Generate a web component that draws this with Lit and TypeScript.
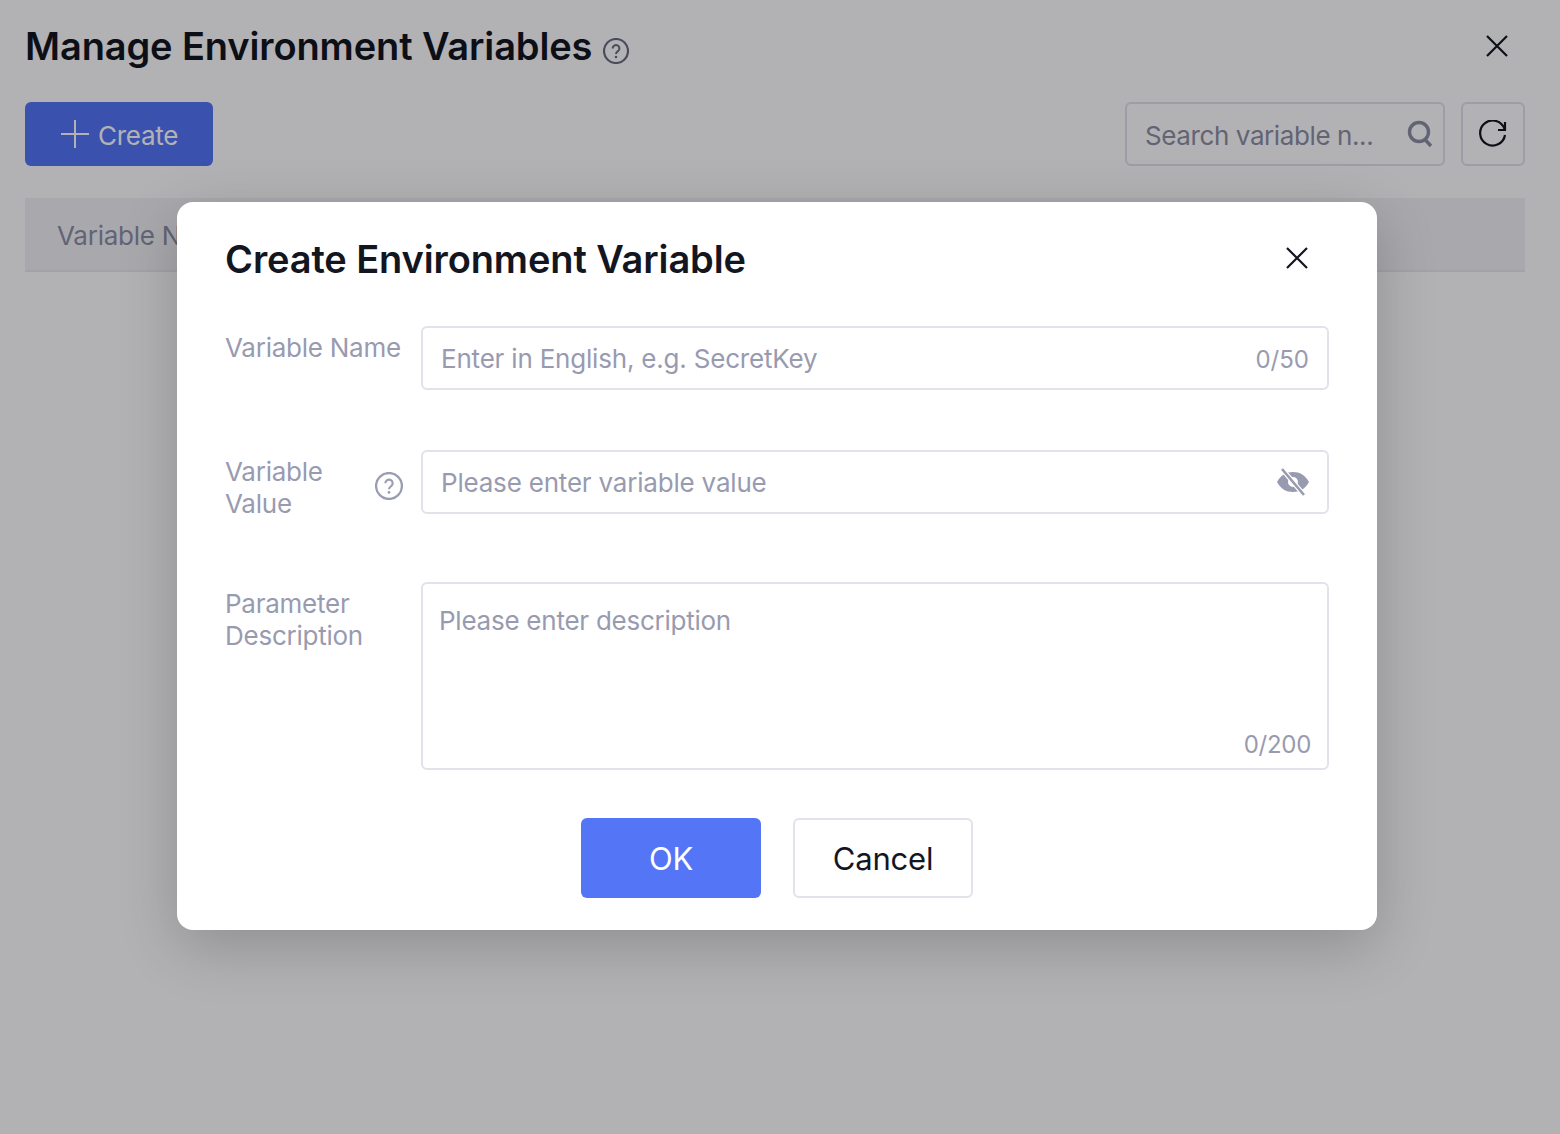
import { LitElement, html, css, svg } from "lit";
import { customElement } from "lit/decorators.js";

const closeIcon = svg`<path d="M2 2 L22 22 M22 2 L2 22" fill="none" stroke="currentColor" stroke-width="2.2"/>`;
const helpIcon = svg`<circle cx="13" cy="13" r="12" fill="none" stroke="currentColor" stroke-width="2.2"/><path d="M9.6 10.4a3.4 3.4 0 1 1 5.4 2.8c-1.2.8-2 1.4-2 2.9" fill="none" stroke="currentColor" stroke-width="2"/><circle cx="13" cy="19" r="1.3" fill="currentColor"/>`;

@customElement("app-root")
export class AppRoot extends LitElement {
  static styles = css`
    :host { display: block; position: relative; width: 1560px; height: 1134px; overflow: hidden; background: #fff; font-family: Inter, "Liberation Sans", sans-serif; color: #14161f; font-size: 26px; letter-spacing: -0.25px; }
    * { box-sizing: border-box; }
    .page { display: flex; flex-direction: column; padding: 0 35px 0 25px; width: 1560px; }
    .head { display: flex; align-items: center; height: 102px; padding-bottom: 10px; }
    .head h1, .dialog h2 { margin: 0; font-size: 38px; line-height: 56px; font-weight: 600; letter-spacing: -0.12px; }
    .head .help { margin: 10px 0 0 11px; width: 26px; height: 26px; color: #686c80; }
    .head .x { margin-left: auto; margin-right: 16px; width: 24px; height: 24px; }
    .toolbar { display: flex; align-items: center; height: 64px; gap: 16px; width: 1500px; }
    .create { display: flex; align-items: center; gap: 9px; height: 64px; width: 188px; padding-left: 36px; background: #5475f6; border-radius: 6px; color: #fff; }
    .create svg { width: 28px; height: 28px; }
    .create span, .search span, .thead span { padding-top: 2px; }
    .search { margin-left: auto; display: flex; align-items: center; justify-content: space-between; width: 320px; height: 64px; padding: 0 10px 0 18px; border: 2px solid #e1e2ea; border-radius: 6px; color: #8d90a5; letter-spacing: -0.4px; }
    .search svg { width: 26px; height: 28px; }
    .refresh { display: flex; align-items: center; justify-content: center; width: 64px; height: 64px; border: 2px solid #e1e2ea; border-radius: 6px; }
    .refresh svg { width: 28px; height: 28px; }
    .thead { margin-top: 32px; width: 1500px; height: 74px; display: flex; align-items: center; padding-left: 32px; background: #f2f3f5; border-bottom: 2px solid #e8e9ee; color: #8d90a5; }
    .overlay { position: absolute; inset: 0; background: rgba(0, 0, 6, 0.3); display: flex; justify-content: center; align-items: flex-start; padding: 202px 6px 0 0; }
    .dialog { width: 1200px; height: 728px; background: #fff; border-radius: 16px; padding: 32px 48px; display: flex; flex-direction: column; box-shadow: 0 16px 60px rgba(0, 0, 0, 0.2); }
    .title { display: flex; align-items: center; justify-content: space-between; height: 50px; margin-bottom: 42px; }
    .dialog h2 { white-space: nowrap; }
    .title svg { width: 24px; height: 24px; margin-right: 20px; margin-top: -2px; }
    .row { display: flex; margin-bottom: 60px; }
    .label { width: 196px; flex: none; display: flex; align-items: center; justify-content: space-between; padding: 5px 18px 2px 0; line-height: 32px; color: #989bb0; align-self: flex-start; }
    .label.wide { padding-right: 0; white-space: nowrap; }
    .label span { padding-top: 1px; }
    .label.wide { padding-top: 6px; padding-bottom: 2px; }
    .label svg { width: 28px; height: 28px; color: #9a9db1; flex: none; margin-right: 0; margin-top: -3px; }
    .lab2 { width: 110px; }
    .input { flex: 1; height: 64px; border: 2px solid #e1e2ea; border-radius: 6px; display: flex; align-items: center; justify-content: space-between; padding: 0 18px; color: #989bb0; letter-spacing: -0.2px; }
    .input .count { font-size: 24px; letter-spacing: 0; margin-top: 2px; }
    .input svg { width: 34px; height: 28px; margin-right: -1px; }
    .area { flex: 1; height: 188px; border: 2px solid #e1e2ea; border-radius: 6px; padding: 20px 16px 6px; display: flex; flex-direction: column; justify-content: space-between; color: #989bb0; line-height: 34px; }
    .area .count { align-self: flex-end; font-size: 24px; letter-spacing: -0.3px; }
    .row.last { margin-bottom: 48px; }
    .foot { display: flex; justify-content: center; gap: 32px; }
    .btn { width: 180px; height: 80px; border-radius: 6px; display: flex; align-items: center; justify-content: center; font-size: 31px; letter-spacing: -0.2px; }
    .ok { background: #5475f6; color: #fff; }
    .cancel { border: 2px solid #e1e2ea; color: #14161f; }
  `;

  render() {
    return html`
      <div class="page">
        <div class="head">
          <h1>Manage Environment Variables</h1>
          <svg class="help" viewBox="0 0 26 26">${helpIcon}</svg>
          <svg class="x" viewBox="0 0 24 24">${closeIcon}</svg>
        </div>
        <div class="toolbar">
          <div class="create">
            <svg viewBox="0 0 28 28"><path d="M14 0V28M0 14H28" stroke="currentColor" stroke-width="2"/></svg>
            <span>Create</span>
          </div>
          <div class="search">
            <span>Search variable n...</span>
            <svg viewBox="0 0 26 28"><circle cx="12" cy="12" r="9.500" fill="none" stroke="currentColor" stroke-width="3.400"/><path d="M17.500 19L24 26" stroke="currentColor" stroke-width="3.400"/></svg>
          </div>
          <div class="refresh">
            <svg viewBox="0 0 28 28"><path d="M25.500 9A12.500 12.500 0 1 0 26 15" fill="none" stroke="#14161f" stroke-width="2.200"/><path d="M26 2V10H19" fill="none" stroke="#14161f" stroke-width="2.200"/></svg>
          </div>
        </div>
        <div class="thead"><span>Variable Name</span></div>
      </div>
      <div class="overlay">
        <div class="dialog">
          <div class="title">
            <h2>Create Environment Variable</h2>
            <svg viewBox="0 0 24 24">${closeIcon}</svg>
          </div>
          <div class="row">
            <div class="label wide">Variable Name</div>
            <div class="input"><span>Enter in English, e.g. SecretKey</span><span class="count">0/50</span></div>
          </div>
          <div class="row">
            <div class="label"><span class="lab2">Variable Value</span><svg viewBox="0 0 26 26">${helpIcon}</svg></div>
            <div class="input"><span>Please enter variable value</span>
              <svg viewBox="0 0 34 28"><path fill-rule="evenodd" fill="currentColor" d="M1 14C5 7 10 4 17 4s12 3 16 10c-4 7-9 10-16 10S5 21 1 14zM17 9a5 5 0 1 0 0 10a5 5 0 0 0 0-10z"/><path d="M6 1L28 27" stroke="#fff" stroke-width="5"/><path d="M6 1L28 27" stroke="currentColor" stroke-width="2.600"/></svg>
            </div>
          </div>
          <div class="row last">
            <div class="label"><span>Parameter Description</span></div>
            <div class="area"><span>Please enter description</span><span class="count">0/200</span></div>
          </div>
          <div class="foot">
            <div class="btn ok">OK</div>
            <div class="btn cancel">Cancel</div>
          </div>
        </div>
      </div>
    `;
  }
}
